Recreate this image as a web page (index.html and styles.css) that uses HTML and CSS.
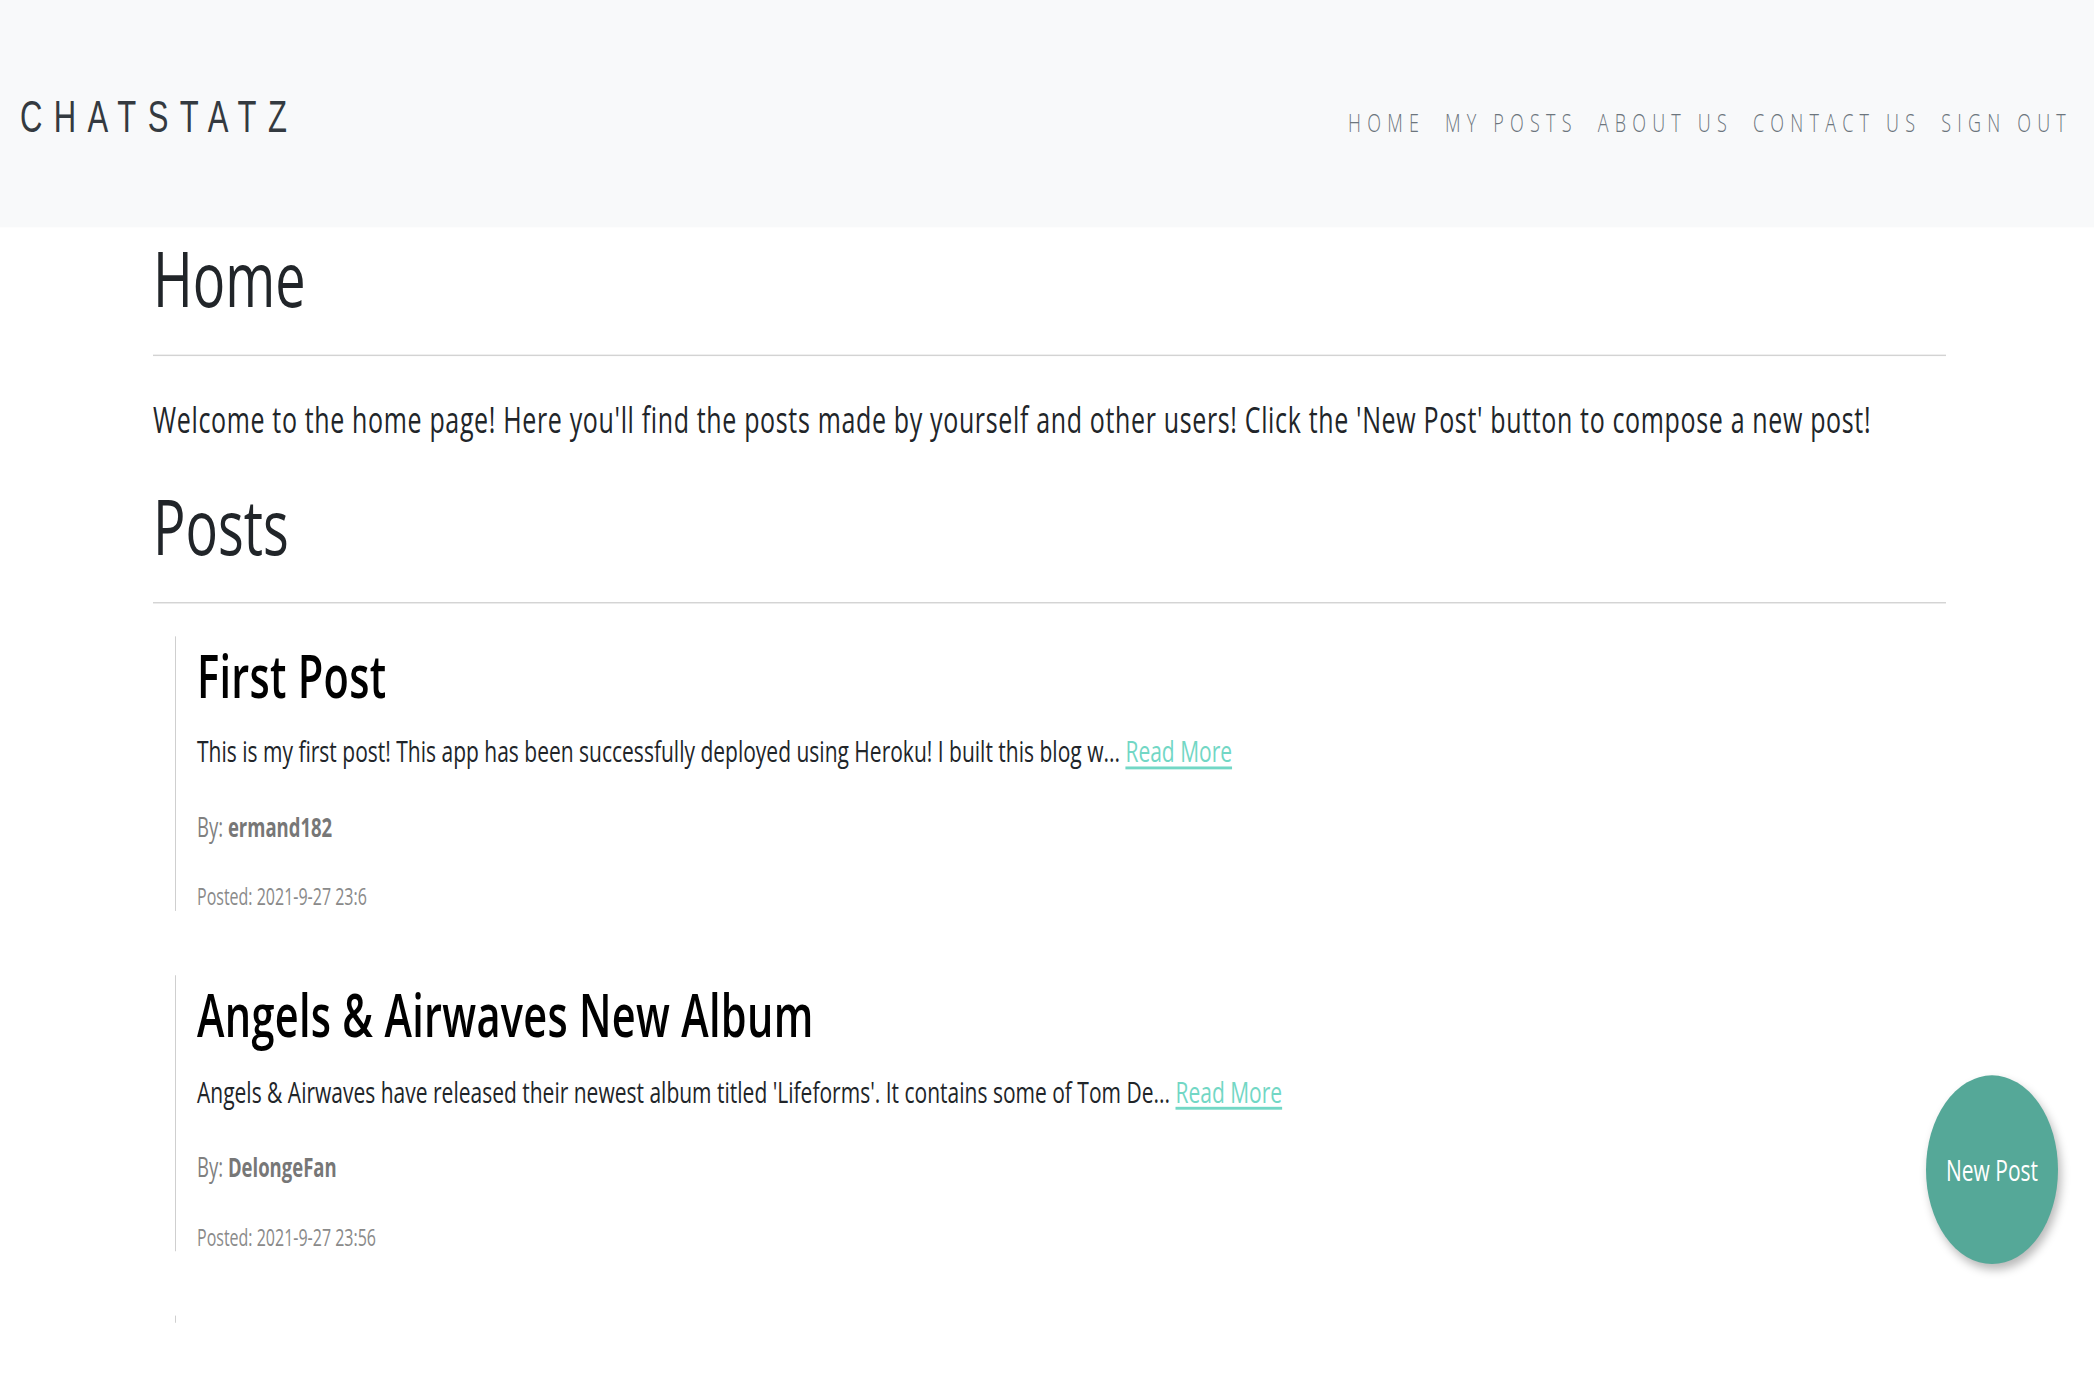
FILE: index.html
```html
<!DOCTYPE html>
<html lang="en">
<head>
<meta charset="utf-8">
<title>ChatStatz - Home</title>
<link rel="stylesheet" href="styles.css">
</head>
<body>
<div class="page">
  <header class="navbar">
    <a class="brand" href="#">CHATSTATZ</a>
    <nav>
      <ul class="nav-links">
        <li><a href="#">HOME</a></li>
        <li><a href="#">MY POSTS</a></li>
        <li><a href="#">ABOUT US</a></li>
        <li><a href="#">CONTACT US</a></li>
        <li><a href="#">SIGN OUT</a></li>
      </ul>
    </nav>
  </header>

  <main class="container">
    <h1 class="page-title">Home</h1>
    <hr class="rule">
    <p class="intro">Welcome to the home page! Here you'll find the posts made by yourself and other users! Click the 'New Post' button to compose a new post!</p>
    <h1 class="page-title posts-title">Posts</h1>
    <hr class="rule">

    <article class="post">
      <h2 class="post-title">First Post</h2>
      <p class="post-excerpt">This is my first post! This app has been successfully deployed using Heroku! I built this blog w... <a class="read-more" href="#">Read More</a></p>
      <p class="post-author">By: <strong>ermand182</strong></p>
      <p class="post-date">Posted: 2021-9-27 23:6</p>
    </article>

    <article class="post">
      <h2 class="post-title">Angels &amp; Airwaves New Album</h2>
      <p class="post-excerpt">Angels &amp; Airwaves have released their newest album titled 'Lifeforms'. It contains some of Tom De... <a class="read-more" href="#">Read More</a></p>
      <p class="post-author">By: <strong>DelongeFan</strong></p>
      <p class="post-date">Posted: 2021-9-27 23:56</p>
    </article>

    <article class="post post-empty"></article>
  </main>

  <a class="new-post" href="#">New Post</a>
</div>
</body>
</html>
```

FILE: styles.css
```css
html {
  overflow: hidden;
}

html, body {
  margin: 0;
  padding: 0;
  background: #ffffff;
}

body {
  min-height: 1400px;
  font-family: "Open Sans", "Noto Sans", sans-serif;
  color: #212529;
}

.page {
  position: relative;
  width: 2094px;
  height: 979px;
  transform: scaleY(1.43);
  transform-origin: top left;
}

/* ---------- navbar ---------- */
.navbar {
  display: flex;
  align-items: baseline;
  justify-content: space-between;
  box-sizing: border-box;
  height: 159px;
  padding: 66px 16px 0 20px;
  background: #f8f9fa;
}

.brand {
  font-family: "Liberation Sans", Arial, sans-serif;
  font-size: 31px;
  line-height: 1;
  letter-spacing: 11.4px;
  color: #343a40;
  text-decoration: none;
}

.nav-links {
  display: flex;
  list-style: none;
  margin: 0;
  padding: 0;
  gap: 8px;
}

.nav-links a {
  display: block;
  padding: 0 6px;
  font-size: 18px;
  font-weight: 300;
  line-height: 1;
  letter-spacing: 6.2px;
  color: #6c757d;
  text-decoration: none;
}

/* ---------- content ---------- */
.container {
  margin: 0 148px 0 153px;
}

.page-title {
  margin: 2px 0 0;
  font-size: 54px;
  font-weight: 500;
  line-height: 66px;
  color: #212529;
}

.posts-title {
  margin-top: 23px;
}

.rule {
  margin: 21px 0 0;
  border: 0;
  border-top: 1px solid #d3d3d3;
}

.intro {
  margin: 27px 0 0;
  font-size: 25px;
  line-height: 34.5px;
  letter-spacing: 0.65px;
}

.post {
  margin: 23px 0 0 22px;
  padding-left: 21px;
  border-left: 1px solid #cfcfcf;
}

.post + .post {
  margin-top: 45px;
}

.post-title {
  margin: 0;
  font-size: 41.5px;
  font-weight: 600;
  line-height: 54px;
  letter-spacing: 0.3px;
  color: #000000;
}

.post-excerpt {
  margin: 11.5px 0 0;
  font-size: 21px;
  line-height: 30px;
  color: #212529;
}

.read-more {
  color: #72d7c5;
  text-decoration: underline;
  text-decoration-thickness: 1.5px;
  text-underline-offset: 3px;
}

.post-author {
  margin: 24px 0 0;
  font-size: 18.5px;
  line-height: 28.5px;
  color: #808080;
}

.post-author strong {
  font-weight: 700;
  color: #777777;
}

.post-date {
  margin: 24.4px 0 0;
  font-size: 16px;
  line-height: 20.4px;
  color: #8a8a8a;
}

.post-empty {
  height: 5px;
}

/* ---------- floating button ---------- */
.new-post {
  position: absolute;
  top: 752px;
  right: 36px;
  display: flex;
  align-items: center;
  justify-content: center;
  width: 132px;
  height: 132px;
  border-radius: 50%;
  background: #55a898;
  box-shadow: 3px 4px 8px rgba(0, 0, 0, 0.28);
  color: #ffffff;
  font-size: 21px;
  text-decoration: none;
}
```
